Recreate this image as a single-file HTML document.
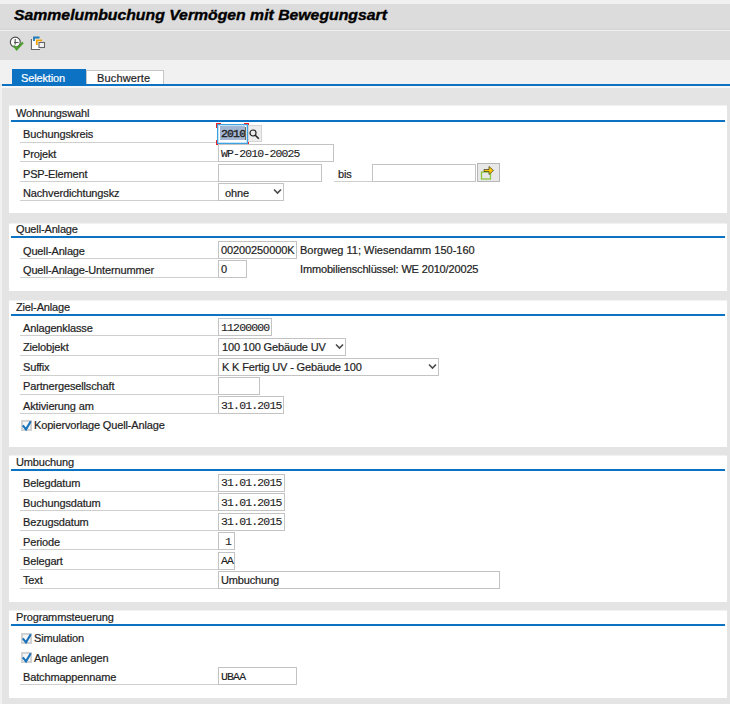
<!DOCTYPE html>
<html><head><meta charset="utf-8"><style>
html,body{margin:0;padding:0}
body{width:730px;height:704px;position:relative;overflow:hidden;background:#e4e4e4}
body>div,body>svg{position:absolute}
.t{font:11px "Liberation Sans",sans-serif;line-height:13px;color:#222222;white-space:pre;letter-spacing:-0.15px;-webkit-text-stroke:0.2px #222222}
.m{font:11.5px "Liberation Mono",monospace;line-height:13px;color:#222222;white-space:pre;letter-spacing:-0.85px;-webkit-text-stroke:0.1px #222222}
.h{font:bold italic 14px "Liberation Sans",sans-serif;line-height:16px;color:#000;white-space:pre;-webkit-text-stroke:0.35px #000}
</style></head><body>
<div style="left:0px;top:0px;width:730px;height:4px;background:#f1f1f1"></div>
<div style="left:0px;top:4px;width:730px;height:25px;background:#dcdcdc"></div>
<div style="left:0px;top:28px;width:730px;height:2px;background:#d8d8d8"></div>
<div style="left:0px;top:30px;width:730px;height:1px;background:#ececec"></div>
<div style="left:0px;top:31px;width:730px;height:29px;background:#dcdcdc"></div>
<div class="h" style="left:14px;top:7px;transform:scaleX(1.127);transform-origin:0 0">Sammelumbuchung Vermögen mit Bewegungsart</div>
<svg style="left:8px;top:35px" width="18" height="16" viewBox="0 0 18 16">
<circle cx="7.3" cy="7.1" r="5" fill="#fafafa" stroke="#4a4a4a" stroke-width="1.1"/>
<path d="M7.2 4 V9.4 M6 7.5 H10.6" stroke="#555" stroke-width="1.1"/>
<path d="M5.8 10.5 L8.6 14.3 L15 7.5" fill="none" stroke="#4aa02a" stroke-width="2.1"/>
</svg>
<svg style="left:29px;top:35px" width="18" height="16" viewBox="0 0 18 16">
<path d="M2.5 4 V14.5 H11" fill="none" stroke="#666" stroke-width="1.2"/>
<rect x="3" y="4.5" width="8" height="9.5" fill="#fff"/>
<path d="M5 6 V2.5 H10.5" fill="none" stroke="#1f7ab5" stroke-width="1.8"/>
<path d="M7.8 10 V5.3 H13" fill="none" stroke="#f5a300" stroke-width="1.8"/>
<rect x="10" y="7.5" width="5.5" height="5" fill="#f3f3f3" stroke="#666" stroke-width="1.1"/>
</svg>
<div style="left:0px;top:60px;width:730px;height:24px;background:#f1f1f1"></div>
<div style="left:12px;top:69px;width:74px;height:15px;background:#0c72c4"></div>
<div class="t" style="left:21px;top:72px;color:#fff;-webkit-text-stroke:0.2px #fff">Selektion</div>
<div style="left:86px;top:70px;width:78px;height:14px;background:#fff;border:1px solid #c6c6c6;border-bottom:0;box-sizing:border-box"></div>
<div class="t" style="left:97px;top:72px;letter-spacing:0.15px">Buchwerte</div>
<div style="left:2px;top:84px;width:728px;height:2px;background:#0c72c4"></div>
<div style="left:0px;top:86px;width:730px;height:618px;background:#e4e4e4"></div>
<div style="left:0px;top:86px;width:2px;height:618px;background:#f1f1f1"></div>
<div style="left:2px;top:86px;width:728px;height:2px;background:#f6f6f6"></div>
<div style="left:9px;top:105px;width:718px;height:108px;background:#fff;border-top:1px solid #f2f2f2;box-sizing:border-box"></div>
<div class="t" style="left:16px;top:107px;">Wohnungswahl</div>
<div style="left:11px;top:120px;width:714px;height:2px;background:#0c72c4"></div>
<div class="t" style="left:23px;top:128px;">Buchungskreis</div>
<div style="left:20px;top:142px;width:198px;height:1px;background:#cfcfcf"></div>
<div class="t" style="left:23px;top:148px;">Projekt</div>
<div style="left:20px;top:161px;width:198px;height:1px;background:#cfcfcf"></div>
<div class="t" style="left:23px;top:168px;">PSP-Element</div>
<div style="left:20px;top:181px;width:198px;height:1px;background:#cfcfcf"></div>
<div class="t" style="left:23px;top:187px;">Nachverdichtungskz</div>
<div style="left:20px;top:200px;width:198px;height:1px;background:#cfcfcf"></div>
<svg style="left:216px;top:123px" width="33" height="22" viewBox="0 0 33 22"><path d="M1 5 V1 H5 M28 1 H32 V5 M32 17 V21 H28 M5 21 H1 V17" fill="none" stroke="#e82424" stroke-width="2.2"/></svg>
<div style="left:217px;top:124px;width:31px;height:20px;background:#fff;border:1px solid #3ea2e2;box-shadow:inset 0 0 0 0.5px #8cc6ee;box-sizing:border-box"></div>
<div style="left:220px;top:126px;width:25px;height:14px;background:#a3b7d4"></div>
<div class="m" style="left:221px;top:127px;-webkit-text-stroke:0.35px #222">2010</div>
<div style="left:245px;top:127px;width:1px;height:13px;background:#7a6a50"></div>
<div style="left:248px;top:125px;width:14px;height:17px;background:#ececec;border:1px solid #d4d4d4;box-sizing:border-box"></div>
<svg style="left:248px;top:125px" width="14" height="17" viewBox="0 0 14 17"><circle cx="5" cy="8" r="3" fill="none" stroke="#222" stroke-width="1.2"/><path d="M7.3 10.3 L10.8 13.8" stroke="#222" stroke-width="1.6"/></svg>
<div style="left:218px;top:144px;width:116px;height:18px;background:#fff;border:1px solid #c3c3c3;box-sizing:border-box"></div>
<div class="m" style="left:221px;top:147px;">WP-2010-20025</div>
<div style="left:218px;top:164px;width:104px;height:18px;background:#fff;border:1px solid #c3c3c3;box-sizing:border-box"></div>
<div class="t" style="left:338px;top:168px;">bis</div>
<div style="left:334px;top:181px;width:38px;height:1px;background:#cfcfcf"></div>
<div style="left:372px;top:164px;width:104px;height:18px;background:#fff;border:1px solid #c3c3c3;box-sizing:border-box"></div>
<div style="left:477px;top:163px;width:23px;height:19px;background:#e8e8e8;border:1px solid #b6b6b6;box-sizing:border-box"></div>
<svg style="left:477px;top:163px" width="23" height="19" viewBox="0 0 23 19">
<rect x="4.5" y="9" width="9" height="7" fill="none" stroke="#8cc63f" stroke-width="1.3"/>
<path d="M7 6.5 H12 V3.5 L16.5 7.5 L12 11.5 V8.5 H7 Z" fill="#ffc800" stroke="#4a4a20" stroke-width="0.8"/>
</svg>
<div style="left:218px;top:183px;width:66px;height:18px;background:#fff;border:1px solid #c3c3c3;box-sizing:border-box"></div>
<div class="t" style="left:225px;top:187px;">ohne</div>
<svg style="left:273px;top:188px" width="9" height="7" viewBox="0 0 9 7"><path d="M1 1.5 L4.5 5 L8 1.5" fill="none" stroke="#4a4a4a" stroke-width="1.6"/></svg>
<div style="left:9px;top:223px;width:718px;height:68px;background:#fff;border-top:1px solid #f2f2f2;box-sizing:border-box"></div>
<div class="t" style="left:16px;top:223px;">Quell-Anlage</div>
<div style="left:11px;top:236px;width:714px;height:2px;background:#0c72c4"></div>
<div class="t" style="left:23px;top:245px;">Quell-Anlage</div>
<div style="left:20px;top:258px;width:198px;height:1px;background:#cfcfcf"></div>
<div class="t" style="left:23px;top:264px;">Quell-Anlage-Unternummer</div>
<div style="left:20px;top:277px;width:198px;height:1px;background:#cfcfcf"></div>
<div style="left:218px;top:241px;width:79px;height:18px;background:#fff;border:1px solid #c3c3c3;box-sizing:border-box"></div>
<div class="t" style="left:221px;top:244px;letter-spacing:-0.1px">00200250000K</div>
<div style="left:218px;top:260px;width:29px;height:18px;background:#fff;border:1px solid #c3c3c3;box-sizing:border-box"></div>
<div class="t" style="left:221px;top:263px;">0</div>
<div class="t" style="left:300px;top:244px;letter-spacing:0">Borgweg 11; Wiesendamm 150-160</div>
<div class="t" style="left:300px;top:263px;">Immobilienschlüssel: WE 2010/20025</div>
<div style="left:9px;top:300px;width:718px;height:147px;background:#fff;border-top:1px solid #f2f2f2;box-sizing:border-box"></div>
<div class="t" style="left:16px;top:301px;">Ziel-Anlage</div>
<div style="left:11px;top:314px;width:714px;height:2px;background:#0c72c4"></div>
<div class="t" style="left:23px;top:322px;">Anlagenklasse</div>
<div style="left:20px;top:335px;width:198px;height:1px;background:#cfcfcf"></div>
<div class="t" style="left:23px;top:341px;">Zielobjekt</div>
<div style="left:20px;top:355px;width:198px;height:1px;background:#cfcfcf"></div>
<div class="t" style="left:23px;top:361px;">Suffix</div>
<div style="left:20px;top:375px;width:198px;height:1px;background:#cfcfcf"></div>
<div class="t" style="left:23px;top:380px;">Partnergesellschaft</div>
<div style="left:20px;top:394px;width:198px;height:1px;background:#cfcfcf"></div>
<div class="t" style="left:23px;top:400px;">Aktivierung am</div>
<div style="left:20px;top:413px;width:198px;height:1px;background:#cfcfcf"></div>
<div style="left:218px;top:318px;width:54px;height:18px;background:#fff;border:1px solid #c3c3c3;box-sizing:border-box"></div>
<div class="m" style="left:221px;top:321px;">11200000</div>
<div style="left:218px;top:338px;width:128px;height:18px;background:#fff;border:1px solid #c3c3c3;box-sizing:border-box"></div>
<div class="t" style="left:222px;top:341px;">100 100 Gebäude UV</div>
<svg style="left:335px;top:343px" width="9" height="7" viewBox="0 0 9 7"><path d="M1 1.5 L4.5 5 L8 1.5" fill="none" stroke="#4a4a4a" stroke-width="1.6"/></svg>
<div style="left:218px;top:358px;width:221px;height:18px;background:#fff;border:1px solid #c3c3c3;box-sizing:border-box"></div>
<div class="t" style="left:222px;top:361px;">K K Fertig UV - Gebäude 100</div>
<svg style="left:428px;top:363px" width="9" height="7" viewBox="0 0 9 7"><path d="M1 1.5 L4.5 5 L8 1.5" fill="none" stroke="#4a4a4a" stroke-width="1.6"/></svg>
<div style="left:218px;top:377px;width:42px;height:18px;background:#fff;border:1px solid #c3c3c3;box-sizing:border-box"></div>
<div style="left:218px;top:396px;width:66px;height:18px;background:#fff;border:1px solid #c3c3c3;box-sizing:border-box"></div>
<div class="m" style="left:221px;top:399px;">31.01.2015</div>
<div style="left:21px;top:420px;width:11px;height:11px;background:#f6f6f6;border:2px solid #d2d2d2;box-sizing:border-box"></div>
<svg style="left:21px;top:420px" width="12" height="12" viewBox="0 0 12 12"><path d="M1.8 5.3 L5 9.3 L9.8 1.3" fill="none" stroke="#1872bd" stroke-width="2.1"/></svg>
<div class="t" style="left:34px;top:419px;">Kopiervorlage Quell-Anlage</div>
<div style="left:9px;top:455px;width:718px;height:147px;background:#fff;border-top:1px solid #f2f2f2;box-sizing:border-box"></div>
<div class="t" style="left:16px;top:456px;">Umbuchung</div>
<div style="left:11px;top:469px;width:714px;height:2px;background:#0c72c4"></div>
<div class="t" style="left:23px;top:477px;">Belegdatum</div>
<div style="left:20px;top:491px;width:198px;height:1px;background:#cfcfcf"></div>
<div class="t" style="left:23px;top:497px;">Buchungsdatum</div>
<div style="left:20px;top:510px;width:198px;height:1px;background:#cfcfcf"></div>
<div class="t" style="left:23px;top:516px;">Bezugsdatum</div>
<div style="left:20px;top:530px;width:198px;height:1px;background:#cfcfcf"></div>
<div class="t" style="left:23px;top:536px;">Periode</div>
<div style="left:20px;top:549px;width:198px;height:1px;background:#cfcfcf"></div>
<div class="t" style="left:23px;top:555px;">Belegart</div>
<div style="left:20px;top:569px;width:198px;height:1px;background:#cfcfcf"></div>
<div class="t" style="left:23px;top:574px;">Text</div>
<div style="left:20px;top:588px;width:198px;height:1px;background:#cfcfcf"></div>
<div style="left:218px;top:474px;width:67px;height:18px;background:#fff;border:1px solid #c3c3c3;box-sizing:border-box"></div>
<div class="m" style="left:221px;top:476px;">31.01.2015</div>
<div style="left:218px;top:493px;width:67px;height:18px;background:#fff;border:1px solid #c3c3c3;box-sizing:border-box"></div>
<div class="m" style="left:221px;top:496px;">31.01.2015</div>
<div style="left:218px;top:513px;width:67px;height:18px;background:#fff;border:1px solid #c3c3c3;box-sizing:border-box"></div>
<div class="m" style="left:221px;top:515px;">31.01.2015</div>
<div style="left:218px;top:532px;width:17px;height:18px;background:#fff;border:1px solid #c3c3c3;box-sizing:border-box"></div>
<div class="m" style="left:218px;width:13px;text-align:right;top:535px;">1</div>
<div style="left:218px;top:552px;width:17px;height:18px;background:#fff;border:1px solid #c3c3c3;box-sizing:border-box"></div>
<div class="m" style="left:221px;top:554px;">AA</div>
<div style="left:218px;top:571px;width:282px;height:18px;background:#fff;border:1px solid #c3c3c3;box-sizing:border-box"></div>
<div class="t" style="left:221px;top:574px;">Umbuchung</div>
<div style="left:9px;top:610px;width:718px;height:88px;background:#fff;border-top:1px solid #f2f2f2;box-sizing:border-box"></div>
<div class="t" style="left:16px;top:611px;">Programmsteuerung</div>
<div style="left:11px;top:624px;width:714px;height:2px;background:#0c72c4"></div>
<div style="left:21px;top:633px;width:11px;height:11px;background:#f6f6f6;border:2px solid #d2d2d2;box-sizing:border-box"></div>
<svg style="left:21px;top:633px" width="12" height="12" viewBox="0 0 12 12"><path d="M1.8 5.3 L5 9.3 L9.8 1.3" fill="none" stroke="#1872bd" stroke-width="2.1"/></svg>
<div class="t" style="left:34px;top:632px;">Simulation</div>
<div style="left:21px;top:652px;width:11px;height:11px;background:#f6f6f6;border:2px solid #d2d2d2;box-sizing:border-box"></div>
<svg style="left:21px;top:652px" width="12" height="12" viewBox="0 0 12 12"><path d="M1.8 5.3 L5 9.3 L9.8 1.3" fill="none" stroke="#1872bd" stroke-width="2.1"/></svg>
<div class="t" style="left:34px;top:652px;">Anlage anlegen</div>
<div class="t" style="left:23px;top:671px;">Batchmappenname</div>
<div style="left:20px;top:684px;width:198px;height:1px;background:#cfcfcf"></div>
<div style="left:218px;top:667px;width:79px;height:18px;background:#fff;border:1px solid #c3c3c3;box-sizing:border-box"></div>
<div class="m" style="left:221px;top:670px;">UBAA</div>
</body></html>
